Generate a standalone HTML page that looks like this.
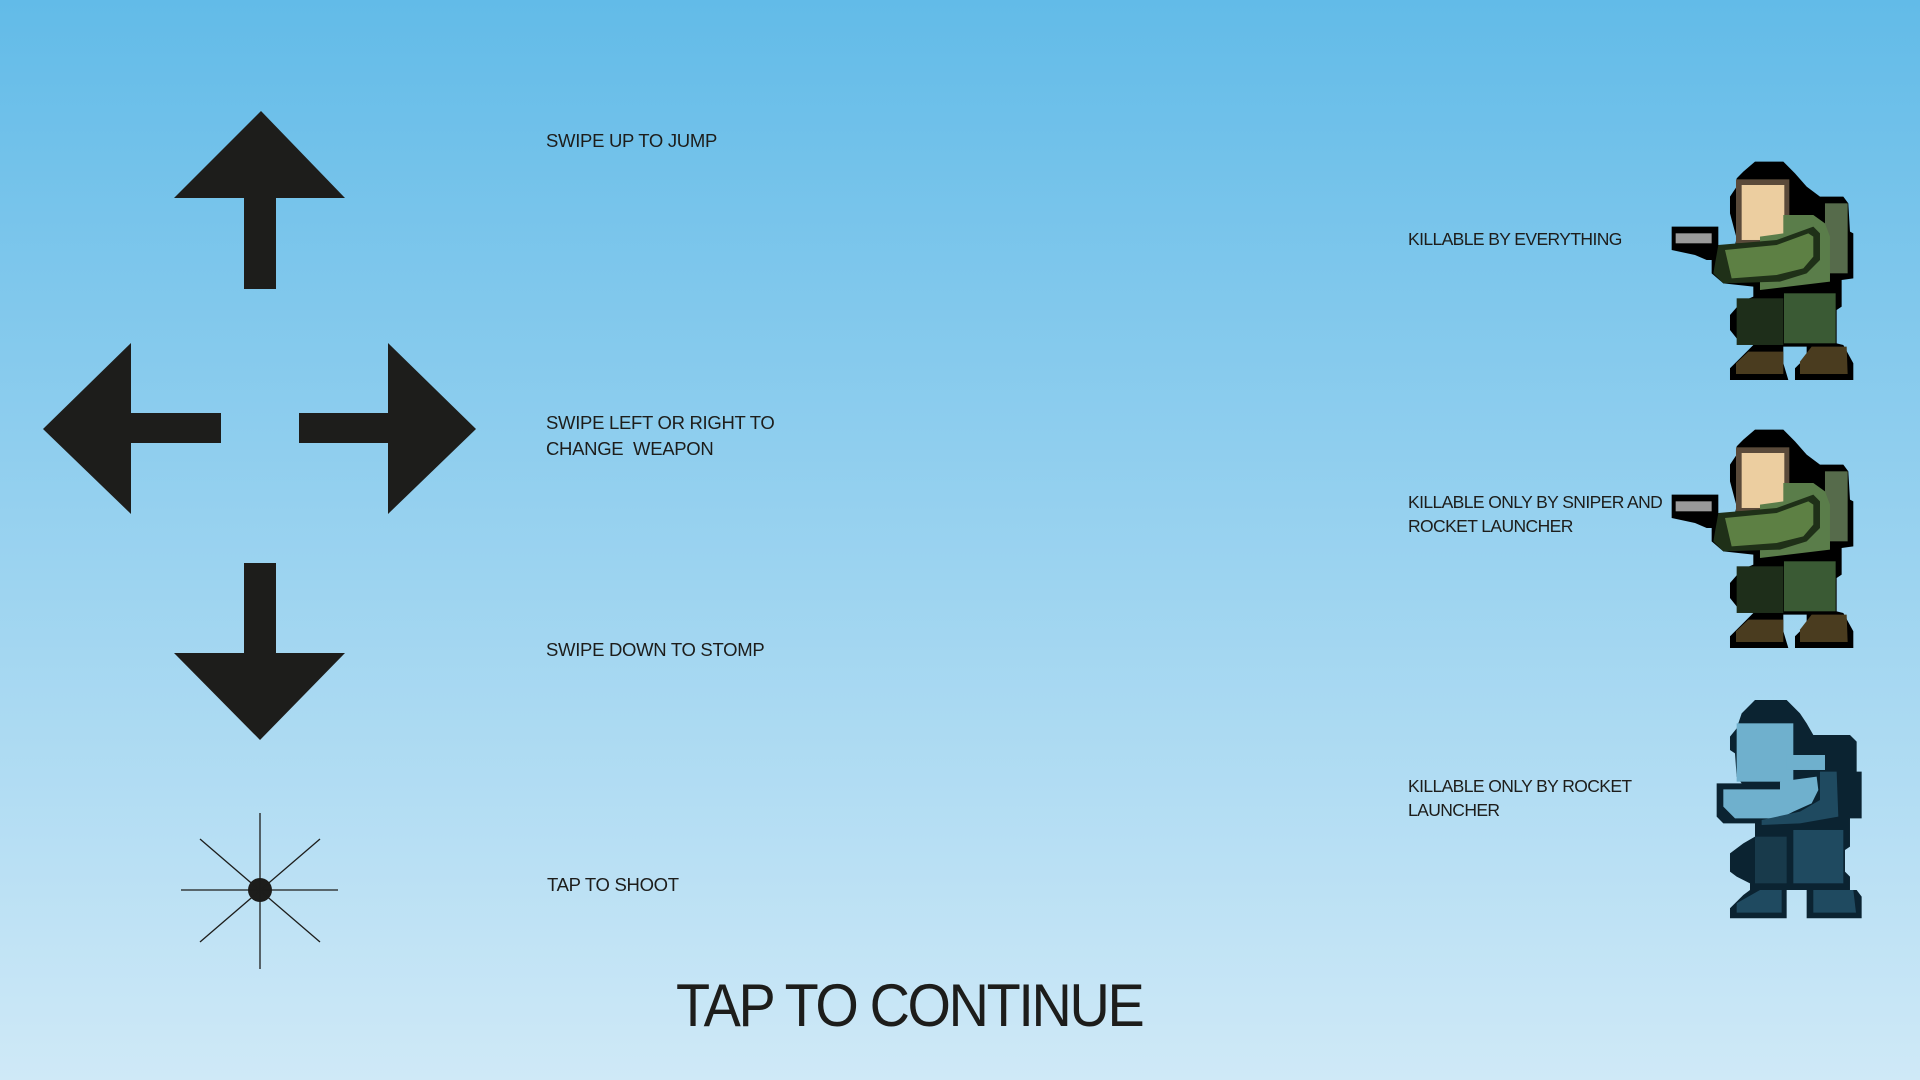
<!DOCTYPE html>
<html><head><style>
body{margin:0;width:1920px;height:1080px;overflow:hidden;background:linear-gradient(#62bbe8,#cfe9f7);font-family:"Liberation Sans",sans-serif;color:#1d1d1b;position:relative}
.t{position:absolute;font-size:18.5px;line-height:24px;letter-spacing:-0.3px;white-space:nowrap}
.r{font-size:17.5px;letter-spacing:-0.6px}
svg{position:absolute;left:0;top:0}
</style></head><body>
<svg width="1920" height="1080">
<g fill="#1d1d1b">
<polygon points="261,111 345,198 174,198"/><rect x="244" y="197" width="32" height="92"/>
<polygon points="43,429 131,343 131,514"/><rect x="130" y="413" width="91" height="30"/>
<polygon points="476,429 388,343 388,514"/><rect x="299" y="413" width="90" height="30"/>
<polygon points="260,740 345,653 174,653"/><rect x="244" y="563" width="32" height="91"/>
<circle cx="260" cy="890" r="12"/>
</g>
<g stroke="#1d1d1b" stroke-width="1.3">
<line x1="260" y1="813" x2="260" y2="969"/><line x1="181" y1="890" x2="338" y2="890"/>
<line x1="200" y1="839" x2="320" y2="942"/><line x1="320" y1="839" x2="200" y2="942"/>
</g>
<defs>
<g id="sol">
<polygon fill="#000" points="230,85 250,65 285,35 370,35 405,70 440,110 480,140 550,140 565,160 570,245 580,250 580,385 545,390 545,470 530,480 530,580 550,585 580,640 580,690 405,690 405,655 440,620 440,590 370,590 370,640 385,690 210,690 210,655 265,600 280,585 230,565 210,540 210,495 245,455 280,440 280,410 190,400 155,370 155,330 140,330 105,315 35,300 35,230 175,230 175,285 225,285 230,265 210,190 210,140 230,110"/>
<rect x="47" y="250" width="108" height="30" fill="#9a9a9a"/>
<rect x="228" y="88" width="160" height="192" fill="#5a4a3a"/>
<rect x="245" y="105" width="128" height="165" fill="#eccea0"/>
<rect x="495" y="160" width="68" height="210" fill="#566b4b"/>
<polygon fill="#5a7d4a" points="370,195 460,195 495,220 510,260 510,395 300,420 300,260 370,250"/>
<polygon fill="#1f3018" points="175,285 350,270 460,230 480,250 480,330 440,370 360,395 190,400 160,370"/>
<polygon fill="#5d8044" points="195,300 350,285 445,250 460,260 460,320 430,355 350,375 215,385"/>
<rect x="230" y="445" width="140" height="140" fill="#1e2e1a"/>
<rect x="372" y="430" width="155" height="150" fill="#3a5a34"/>
<polygon fill="#4a3c1f" points="265,605 370,605 370,672 228,672 228,640"/>
<polygon fill="#4a3c1f" points="455,590 560,590 563,672 420,672 420,635"/>
</g>
</defs>
<g transform="translate(1660,150) scale(0.3333)"><use href="#sol"/></g>
<g transform="translate(1660,418) scale(0.3333)"><use href="#sol"/></g>
<g transform="translate(1680,690) scale(0.3333)">
<polygon fill="#0b2331" points="225,30 320,30 360,70 380,100 400,135 510,135 530,155 530,245 545,245 545,385 510,385 510,470 495,480 495,545 510,560 510,600 530,600 545,620 545,685 380,685 380,600 320,600 320,685 150,685 150,655 190,615 210,600 210,580 170,560 150,545 150,490 190,460 225,440 225,400 130,400 110,380 110,280 185,280 170,260 165,190 150,180 150,140 170,115 185,70"/>
<rect x="170" y="100" width="170" height="175" fill="#6fb0cd"/>
<rect x="320" y="195" width="115" height="45" fill="#6fb0cd"/>
<polygon fill="#6fb0cd" points="130,298 300,298 300,275 410,260 415,300 395,340 340,365 300,385 165,385 130,350"/>
<polygon fill="#1f4a60" points="420,245 470,245 475,380 360,400 245,405 245,390 360,365 420,330"/>
<rect x="225" y="440" width="95" height="140" fill="#183a4b"/>
<rect x="340" y="420" width="150" height="160" fill="#1f4a60"/>
<polygon fill="#1f4a60" points="240,600 305,600 305,668 170,668 170,640"/>
<polygon fill="#1f4a60" points="400,600 520,600 528,668 400,668"/>
</g>
</svg>
<div class="t" style="left:546px;top:129px">SWIPE UP TO JUMP</div>
<div class="t" style="left:546px;top:410px;line-height:26px">SWIPE LEFT OR RIGHT TO<br>CHANGE&nbsp; WEAPON</div>
<div class="t" style="left:546px;top:638px">SWIPE DOWN TO STOMP</div>
<div class="t" style="left:547px;top:873px">TAP TO SHOOT</div>
<div class="t r" style="left:1408px;top:227px">KILLABLE BY EVERYTHING</div>
<div class="t r" style="left:1408px;top:490px">KILLABLE ONLY BY SNIPER AND<br>ROCKET LAUNCHER</div>
<div class="t r" style="left:1408px;top:774px">KILLABLE ONLY BY ROCKET<br>LAUNCHER</div>
<div style="position:absolute;left:676px;top:970px;font-size:60px;line-height:72px;letter-spacing:-2.5px;white-space:nowrap;transform:scaleX(0.93);transform-origin:0 0">TAP TO CONTINUE</div>
</body></html>
